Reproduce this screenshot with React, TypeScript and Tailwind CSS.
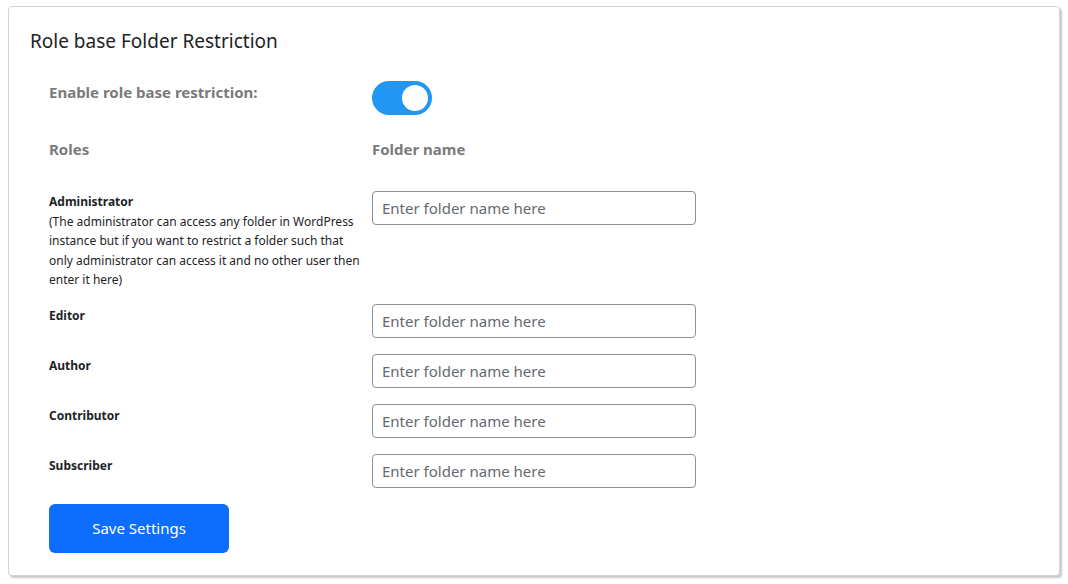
import React, { useState } from "react";

const roles = ["Editor", "Author", "Contributor", "Subscriber"];

const FolderInput: React.FC = () => (
  <input
    type="text"
    placeholder="Enter folder name here"
    className="w-[324px] h-[34px] border border-[#8c8f94] rounded-[4px] px-[9px] text-[15px] text-[#2c3338] placeholder:text-[#646970] outline-none"
  />
);

const App: React.FC = () => {
  const [enabled, setEnabled] = useState(true);

  return (
    <div
      className="min-h-[584px] bg-white pt-[6px] pl-[8px] pr-[8px]"
      style={{ fontFamily: '"Segoe UI", "Noto Sans", sans-serif' }}
    >
      <div className="w-[1052px] h-[570px] bg-white border border-[#d4d4d4] rounded-[4px] shadow-[2px_2px_2px_#c8c8c8] pt-[21px] pl-[21px]">
        <h2 className="text-[19px] leading-[26px] text-[#1d2327] font-normal">
          Role base Folder Restriction
        </h2>

        <div className="pl-[19px] pt-[27px]">
          <div className="grid grid-cols-[316px_324px] gap-x-[7px]">
            <div className="pt-[1px] text-[15px] leading-[20px] font-bold text-[#7a7a7a]">
              Enable role base restriction:
            </div>
            <div>
              <button
                type="button"
                onClick={() => setEnabled(!enabled)}
                className={`w-[60px] h-[34px] rounded-full flex items-center px-[4px] ${
                  enabled ? "bg-[#2196f3] justify-end" : "bg-[#ccc] justify-start"
                }`}
              >
                <span className="w-[26px] h-[26px] rounded-full bg-white block" />
              </button>
            </div>

            <div className="pt-[24px] text-[15px] leading-[20px] font-bold text-[#7a7a7a]">
              Roles
            </div>
            <div className="pt-[24px] text-[15px] leading-[20px] font-bold text-[#7a7a7a]">
              Folder name
            </div>

            <div className="pt-[33px] text-[12px] leading-[19.5px] text-[#1d2327]">
              <div className="font-bold">Administrator</div>
              <div>
                (The administrator can access any folder in WordPress instance but if you want to
                restrict a folder such that only administrator can access it and no other user
                then enter it here)
              </div>
            </div>
            <div className="pt-[32px]">
              <FolderInput />
            </div>

            {roles.map((role, i) => (
              <React.Fragment key={role}>
                <div
                  className={`${i === 0 ? "pt-[16px]" : "pt-[18px]"} text-[12px] leading-[19.5px] font-bold text-[#1d2327]`}
                >
                  {role}
                </div>
                <div className={i === 0 ? "pt-[14px]" : "pt-[16px]"}>
                  <FolderInput />
                </div>
              </React.Fragment>
            ))}
          </div>

          <button
            type="button"
            className="mt-[16px] w-[180px] h-[49px] bg-[#0d6efd] text-white text-[15px] rounded-[6px]"
          >
            Save Settings
          </button>
        </div>
      </div>
    </div>
  );
};

export default App;
